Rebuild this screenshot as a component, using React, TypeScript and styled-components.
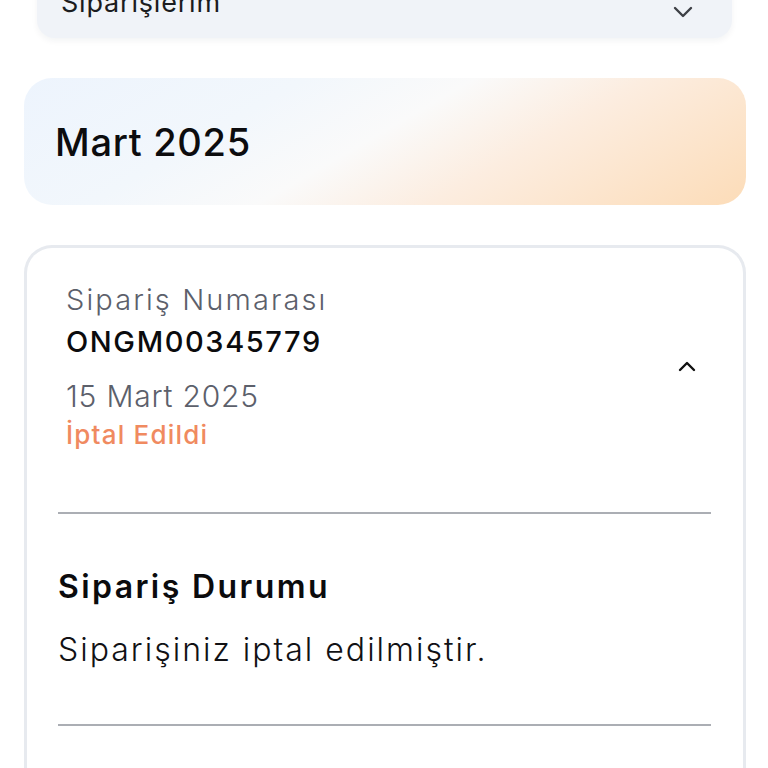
import React from 'react';
import styled, { createGlobalStyle } from 'styled-components';

const GlobalStyle = createGlobalStyle`
  html, body {
    margin: 0;
    padding: 0;
    background: #ffffff;
    font-family: "Inter", "Noto Sans", sans-serif;
    overflow: hidden;
  }
`;

const Page = styled.div`
  display: flex;
  flex-direction: column;
  gap: 40px;
  padding: 0 22px 0 24px;
`;

const Select = styled.div`
  margin: -34px 14px 0 13px;
  height: 72px;
  display: flex;
  align-items: center;
  justify-content: space-between;
  padding: 0 38px 0 24px;
  background: #f0f3f8;
  border-radius: 18px;
  box-shadow: 0 3px 6px rgba(20, 30, 60, 0.05);
`;

const SelectText = styled.span`
  font-size: 27px;
  letter-spacing: 0.8px;
  color: #1b1c20;
  font-weight: 400;
`;

const MonthCard = styled.div`
  height: 127px;
  display: flex;
  align-items: center;
  padding: 0 31px;
  border-radius: 28px;
  background: linear-gradient(
    150deg,
    #edf4fd 0%,
    #f2f7fc 30%,
    #fafafa 48%,
    #fcede0 66%,
    #fcdcb8 100%
  );
`;

const MonthTitle = styled.h2`
  margin: 0;
  font-size: 38px;
  font-weight: 500;
  color: #0c0c0e;
  letter-spacing: 0.7px;
`;

const OrderCard = styled.div`
  border: 3px solid #e7eaef;
  border-bottom: none;
  border-radius: 28px 28px 0 0;
  padding: 0 32px 60px 31px;
  min-height: 560px;
`;

const OrderHeader = styled.div`
  display: flex;
  align-items: center;
  justify-content: space-between;
  padding: 31px 15px 59px 8px;
`;

const OrderInfo = styled.div`
  display: flex;
  flex-direction: column;
`;

const Label = styled.div<{ $size?: number; $spacing?: number }>`
  font-size: ${(p) => p.$size ?? 29}px;
  letter-spacing: ${(p) => p.$spacing ?? 2.1}px;
  line-height: 42px;
  color: #5c606b;
  font-weight: 300;
`;

const OrderNumber = styled.div`
  font-size: 29px;
  letter-spacing: 1.6px;
  line-height: 42px;
  font-weight: 500;
  color: #0b0b0d;
  margin-bottom: 12px;
`;

const Status = styled.div`
  font-size: 26px;
  letter-spacing: 1.2px;
  line-height: 36px;
  font-weight: 500;
  color: #f08a60;
`;

const Divider = styled.hr`
  margin: 0;
  border: none;
  height: 2px;
  background: #abaeb4;
`;

const Section = styled.div`
  padding: 52px 0 53px 0;
  display: flex;
  flex-direction: column;
  gap: 21px;
`;

const SectionTitle = styled.div`
  font-size: 32px;
  line-height: 42px;
  letter-spacing: 2.4px;
  font-weight: 600;
  color: #0b0b0d;
`;

const SectionText = styled.div`
  font-size: 32px;
  line-height: 42px;
  letter-spacing: 2px;
  font-weight: 300;
  color: #111114;
`;

const ChevronsUpDown = () => (
  <svg width="22" height="44" viewBox="0 0 22 44" fill="none" stroke="#3d3f45" strokeWidth="2.4" strokeLinecap="round" strokeLinejoin="round">
    <polyline points="3,11 11,3 19,11" />
    <polyline points="3,28 11,36 19,28" />
  </svg>
);

const ChevronUp = () => (
  <svg width="18" height="12" viewBox="0 0 18 12" fill="none" stroke="#111" strokeWidth="2.4" strokeLinecap="round" strokeLinejoin="round">
    <polyline points="2,10 9,3 16,10" />
  </svg>
);

const App = () => (
  <>
    <GlobalStyle />
    <Page>
      <Select>
        <SelectText>Siparişlerim</SelectText>
        <ChevronsUpDown />
      </Select>
      <MonthCard>
        <MonthTitle>Mart 2025</MonthTitle>
      </MonthCard>
      <OrderCard>
        <OrderHeader>
          <OrderInfo>
            <Label>Sipariş Numarası</Label>
            <OrderNumber>ONGM00345779</OrderNumber>
            <Label $size={30} $spacing={0.8}>15 Mart 2025</Label>
            <Status>İptal Edildi</Status>
          </OrderInfo>
          <ChevronUp />
        </OrderHeader>
        <Divider />
        <Section>
          <SectionTitle>Sipariş Durumu</SectionTitle>
          <SectionText>Siparişiniz iptal edilmiştir.</SectionText>
        </Section>
        <Divider />
      </OrderCard>
    </Page>
  </>
);

export default App;
